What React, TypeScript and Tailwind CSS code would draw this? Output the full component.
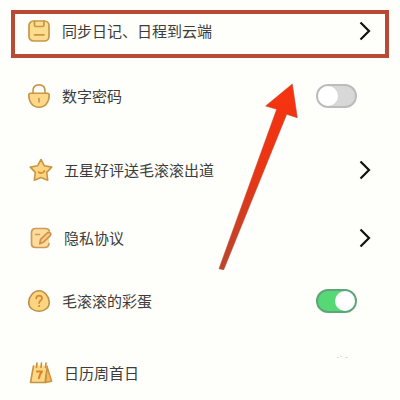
import React, { useState } from 'react';

const SaveIcon = () => (
  <svg viewBox="0 0 24 24" className="h-6 w-6" fill="none" stroke="#c79745" strokeWidth="1.7" strokeLinecap="round" strokeLinejoin="round">
    <rect x="2" y="2" width="20" height="20" rx="4.5" fill="#fcdc8e" />
    <path d="M7.5 2v4.3c0 .8.5 1.2 1.2 1.2h7c.7 0 1.2-.5 1.2-1.2V2" />
    <path d="M7.5 15.8h9.5" />
  </svg>
);

const LockIcon = () => (
  <svg viewBox="0 0 24 24" className="h-6 w-6" fill="none" stroke="#c79745" strokeWidth="1.6" strokeLinecap="round">
    <path d="M6 10V7C6 3.200 8.400.9 12 .9s6 2.300 6 6.100v3" />
    <path d="M3.500 9.300h17c1 0 1.700.7 1.700 1.700 0 7-3.900 12.200-10.200 12.200S1.800 18 1.800 11c0-1 .7-1.700 1.700-1.700z" fill="#fdd88a" />
    <path d="M12 14.500v3.500" />
  </svg>
);

const StarIcon = () => (
  <svg viewBox="0 0 24 24" className="h-6 w-6" fill="none" stroke="#c79745" strokeWidth="1.6" strokeLinecap="round" strokeLinejoin="round">
    <path d="M12 1.500l3.400 6.300 7.300 1.300-5 5.300 1 7.800-6.700-2.700-6.700 2.700 1-7.800-5-5.300 7.300-1.300z" fill="#fdd582" />
    <path d="M9.500 14.200c1.700 1.600 4.600 1.100 6-1.400" stroke="#d98a2b" />
  </svg>
);

const NoteIcon = () => (
  <svg viewBox="0 0 24 24" className="h-6 w-6" fill="none" strokeLinecap="round" strokeLinejoin="round">
    <path d="M20 17.500c-.3 2.500-1.500 4-4 4H6.500c-2.500 0-4-1.500-4-4v-11c0-2.500 1.500-4 4-4h10c2 0 3.200.8 3.800 2.300" fill="#fddc9c" stroke="#cf9a58" strokeWidth="1.700" />
    <path d="M6.500 8.500h4" stroke="#cf9a58" strokeWidth="1.600" />
    <path d="M10.800 17.800l.8-4.500 6.600-6.300c.9-.9 2.100-.9 2.900-.1.800.9.800 2-.1 2.900L14.700 16z" fill="#fcc987" stroke="#cd924c" strokeWidth="1.700" />
  </svg>
);

const EggIcon = () => (
  <svg viewBox="0 0 24 24" className="h-6 w-6" fill="none" strokeLinecap="round">
    <path d="M12 1.800c5.500 0 10.300 6 10.300 11.400 0 5.500-4.500 9-10.300 9s-10.300-3.500-10.300-9C1.700 7.800 6.500 1.800 12 1.800z" fill="#fdd582" stroke="#bb9248" strokeWidth="1.600" />
    <path d="M9.200 9.300c.2-1.700 1.300-2.700 2.900-2.700 1.700 0 2.900 1 2.900 2.600 0 2.300-2.900 2.300-2.900 4.800" stroke="#d58c35" strokeWidth="1.800" />
    <circle cx="12.100" cy="17" r="1.100" fill="#d58c35" />
  </svg>
);

const CalendarIcon = () => (
  <svg viewBox="0 0 24 24" className="h-6 w-6" fill="none" strokeLinecap="round" strokeLinejoin="round">
    <path d="M18 5.500l4.700 14.700-6.200 1.300z" fill="#fcb653" stroke="#cc9546" strokeWidth="1.500" />
    <path d="M4.500 4.500h13.800L16 21.500H1.500z" fill="#fdd887" />
    <path d="M4.500 5L1.500 21.500H16L18.300 5.500" stroke="#c49344" strokeWidth="1.600" />
    <path d="M7.500 6.500l.5-4.500M12 6.500l.5-4.500M16.500 6.500l.5-4.500" stroke="#c98c3c" strokeWidth="1.600" />
    <path d="M8 10.500h5c-1.700 2-2.700 4-3.200 6.800" stroke="#df8328" strokeWidth="2" />
  </svg>
);

const Chevron = () => (
  <svg viewBox="0 0 12 20" className="h-5 w-3" fill="none" stroke="#111111" strokeWidth="2.200">
    <path d="M1.500 1.500l8.500 8.500-8.500 8.500" />
  </svg>
);

type LinkRowProps = {
  icon: React.ReactNode;
  label: string;
  className: string;
  chevron?: boolean;
};

const LinkRow = ({ icon, label, className, chevron = true }: LinkRowProps) => (
  <button type="button" className={`flex w-full items-center text-left ${className}`}>
    {icon}
    <span className="ml-[11px] flex-1">{label}</span>
    {chevron && <Chevron />}
  </button>
);

type SwitchRowProps = {
  id: string;
  icon: React.ReactNode;
  label: string;
  className: string;
  checked: boolean;
  onChange: (value: boolean) => void;
};

const SwitchRow = ({ id, icon, label, className, checked, onChange }: SwitchRowProps) => (
  <div className={`flex items-center ${className}`}>
    {icon}
    <label htmlFor={id} className="ml-[11px] flex-1">{label}</label>
    <input
      id={id}
      type="checkbox"
      checked={checked}
      onChange={(e) => onChange(e.target.checked)}
      className="flex h-6 w-[41px] appearance-none items-center rounded-full border-2 border-[#bcbcbc] bg-[#d8d8d8] before:h-5 before:w-5 before:rounded-full before:bg-white before:content-[''] checked:justify-end checked:border-[#62a47a] checked:bg-[#56d874]"
    />
  </div>
);

const App = () => {
  const [passcode, setPasscode] = useState(false);
  const [easterEgg, setEasterEgg] = useState(true);

  return (
    <main className="relative min-h-screen bg-[#fefefa] pt-2.5 font-['Noto_Sans_CJK_SC',sans-serif] text-[15px] leading-6 text-[#3c3c3c]">
      {/* Highlighted row */}
      <div className="mx-[11px] border-4 border-[#b94a35]">
        <LinkRow icon={<SaveIcon />} label="同步日记、日程到云端" className="h-10 pr-3.5 pb-1.5 pl-3" />
      </div>

      <SwitchRow id="passcode" icon={<LockIcon />} label="数字密码" className="mt-3.5 h-12 pr-[43px] pl-[27px]" checked={passcode} onChange={setPasscode} />
      <LinkRow icon={<StarIcon />} label="五星好评送毛滚滚出道" className="mt-[26px] h-12 pr-[29px] pl-[29px]" />
      <LinkRow icon={<NoteIcon />} label="隐私协议" className="mt-5 h-12 pr-[29px] pl-[29px]" />
      <SwitchRow id="easter-egg" icon={<EggIcon />} label="毛滚滚的彩蛋" className="mt-[15px] h-12 pr-[43px] pl-[27px]" checked={easterEgg} onChange={setEasterEgg} />
      <LinkRow icon={<CalendarIcon />} label="日历周首日" className="mt-6 h-12 pr-[29px] pl-[29px]" chevron={false} />

      {/* Arrow pointing at the highlighted row */}
      <svg viewBox="0 0 80 188" className="pointer-events-none absolute top-[83px] left-[218px] h-[188px] w-20">
        <defs>
          <linearGradient id="arrow" x1="0" y1="0" x2="0" y2="1">
            <stop offset="0" stopColor="#f7330f" />
            <stop offset="0.450" stopColor="#ea3513" />
            <stop offset="1" stopColor="#b8452f" />
          </linearGradient>
        </defs>
        <path d="M74.300 1L79.300 34.700 68.700 31.300 5.700 186.700 1 185.700 58.700 26.300 47.700 23z" fill="url(#arrow)" stroke="#b94a35" strokeWidth="0.600" />
      </svg>

      {/* Faint mark near the corner */}
      <svg viewBox="0 0 14 4" className="pointer-events-none absolute top-[355px] left-[336px] h-1 w-3.5" stroke="#dededa" strokeWidth="1">
        <path d="M1 2.500h2M4 1.500h2M9 2.500h3" />
      </svg>
    </main>
  );
};

export default App;
